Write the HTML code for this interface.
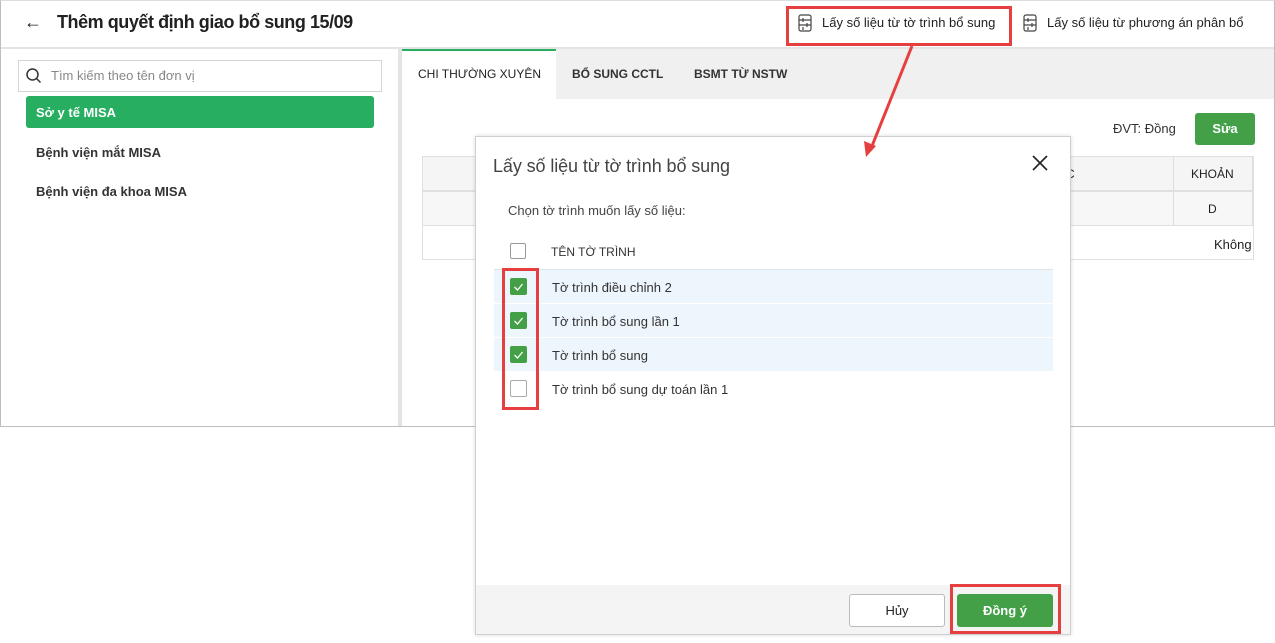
<!DOCTYPE html>
<html><head><meta charset="utf-8"><style>
*{box-sizing:border-box;margin:0;padding:0}
body{width:1275px;height:643px;background:#fff;font-family:"Liberation Sans",sans-serif;color:#212121;position:relative;overflow:hidden;font-size:13px}
.abs{position:absolute}
</style></head><body>
<div class="abs" style="left:0;top:0;width:1275px;height:427px;border:1px solid #bdbdbd;border-top:1px solid #ddd;background:#fff"></div>
<div class="abs" style="left:24px;top:12px;font-size:18px">←</div>
<div class="abs" style="left:57px;top:12px;font-size:18px;font-weight:bold;color:#212121;letter-spacing:-0.45px">Thêm quyết định giao bổ sung 15/09</div>
<svg class="abs" style="left:797px;top:14px" width="16" height="18" viewBox="0 0 16 18" fill="none" stroke="#444" stroke-width="1.2"><rect x="2" y="1" width="12" height="16" rx="2"/><path d="M2 6h12M2 11h12M6 4v4M10 9v4M6 13v3"/></svg>
<div class="abs" style="left:822px;top:15px;font-size:13px">Lấy số liệu từ tờ trình bổ sung</div>
<div class="abs" style="left:786px;top:6px;width:226px;height:40px;border:3px solid #e5403f"></div>
<svg class="abs" style="left:1022px;top:14px" width="16" height="18" viewBox="0 0 16 18" fill="none" stroke="#444" stroke-width="1.2"><rect x="2" y="1" width="12" height="16" rx="2"/><path d="M2 6h12M2 11h12M6 4v4M10 9v4M6 13v3"/></svg>
<div class="abs" style="left:1047px;top:15px;font-size:13px">Lấy số liệu từ phương án phân bổ</div>
<div class="abs" style="left:1px;top:47px;width:1273px;height:2px;background:#e4e4e4"></div>
<div class="abs" style="left:398px;top:49px;width:4px;height:377px;background:#e4e4e4"></div>
<div class="abs" style="left:18px;top:60px;width:364px;height:32px;border:1px solid #d6d6d6"></div>
<svg class="abs" style="left:25px;top:67px" width="18" height="18" viewBox="0 0 18 18" fill="none" stroke="#333" stroke-width="1.5"><circle cx="7.5" cy="7.5" r="5.5"/><path d="M11.5 11.5l4 4"/></svg>
<div class="abs" style="left:51px;top:68px;color:#888">Tìm kiếm theo tên đơn vị</div>
<div class="abs" style="left:26px;top:96px;width:348px;height:32px;background:#27ae60;border-radius:3px;color:#fff;font-weight:bold;padding:9px 10px">Sở y tế MISA</div>
<div class="abs" style="left:36px;top:145px;font-weight:bold;color:#333">Bệnh viện mắt MISA</div>
<div class="abs" style="left:36px;top:184px;font-weight:bold;color:#333">Bệnh viện đa khoa MISA</div>
<div class="abs" style="left:402px;top:49px;width:872px;height:50px;background:#f0f0f0"></div>
<div class="abs" style="left:402px;top:49px;width:154px;height:50px;background:#fff;border-top:2px solid #27ae60"></div>
<div class="abs" style="left:418px;top:67px;font-size:12px;color:#222">CHI THƯỜNG XUYÊN</div>
<div class="abs" style="left:572px;top:67px;font-size:12px;font-weight:bold;color:#333">BỔ SUNG CCTL</div>
<div class="abs" style="left:694px;top:67px;font-size:12px;font-weight:bold;color:#333">BSMT TỪ NSTW</div>
<div class="abs" style="left:1113px;top:121px;color:#333">ĐVT: Đồng</div>
<div class="abs" style="left:1195px;top:113px;width:60px;height:32px;background:#43a047;border-radius:3px;color:#fff;font-weight:bold;text-align:center;line-height:32px">Sửa</div>
<div class="abs" style="left:422px;top:156px;width:832px;height:104px;border:1px solid #e0e0e0;background:#fff"></div>
<div class="abs" style="left:422px;top:156px;width:832px;height:35px;background:#f5f5f5;border:1px solid #e0e0e0"></div>
<div class="abs" style="left:422px;top:191px;width:832px;height:35px;background:#f7f7f7;border:1px solid #e0e0e0"></div>
<div class="abs" style="left:1173px;top:156px;width:1px;height:70px;background:#ddd"></div>
<div class="abs" style="left:1252px;top:156px;width:1px;height:70px;background:#ddd"></div>
<div class="abs" style="left:1191px;top:167px;font-size:12px">KHOẢN</div>
<div class="abs" style="left:1208px;top:202px;font-size:12px">D</div>
<div class="abs" style="left:1214px;top:237px">Không</div>
<div class="abs" style="left:1066px;top:167px;font-size:12px">C</div>
<div class="abs" style="left:475px;top:136px;width:596px;height:499px;background:#fff;border:1px solid #cfcfcf;box-shadow:0 0 4px rgba(0,0,0,.15)"></div>
<div class="abs" style="left:493px;top:156px;font-size:18px;color:#444;letter-spacing:-0.1px">Lấy số liệu từ tờ trình bổ sung</div>
<svg class="abs" style="left:1032px;top:155px" width="16" height="16" viewBox="0 0 16 16" stroke="#222" stroke-width="1.6"><path d="M1 1l14 14M15 1L1 15"/></svg>
<div class="abs" style="left:508px;top:203px;color:#444">Chọn tờ trình muốn lấy số liệu:</div>
<div class="abs" style="left:510px;top:243px;width:16px;height:16px;border:1px solid #999;border-radius:2px;background:#fff"></div>
<div class="abs" style="left:551px;top:245px;font-size:12px;color:#333">TÊN TỜ TRÌNH</div>
<div class="abs" style="left:494px;top:269px;width:559px;height:1px;background:#dde3ea"></div>
<div class="abs" style="left:494px;top:270px;width:559px;height:33px;background:#eef6fd"></div>
<div class="abs" style="left:494px;top:304px;width:559px;height:33px;background:#eef6fd"></div>
<div class="abs" style="left:494px;top:338px;width:559px;height:33px;background:#eef6fd"></div>
<div class="abs" style="left:538px;top:270px;width:2px;height:101px;background:#fff"></div>
<div class="abs" style="left:510px;top:278px;width:17px;height:17px;background:#43a047;border-radius:2px"></div>
<div class="abs" style="left:510px;top:312px;width:17px;height:17px;background:#43a047;border-radius:2px"></div>
<div class="abs" style="left:510px;top:346px;width:17px;height:17px;background:#43a047;border-radius:2px"></div>
<svg class="abs" style="left:510px;top:278px" width="17" height="90"><g fill="none" stroke="#fff" stroke-width="1.3"><path d="M4.5 9l3 3 5-6"/><path d="M4.5 43l3 3 5-6"/><path d="M4.5 77l3 3 5-6"/></g></svg>
<div class="abs" style="left:510px;top:380px;width:17px;height:17px;border:1px solid #aaa;border-radius:2px;background:#fff"></div>
<div class="abs" style="left:552px;top:280px;color:#333">Tờ trình điều chỉnh 2</div>
<div class="abs" style="left:552px;top:314px;color:#333">Tờ trình bổ sung lần 1</div>
<div class="abs" style="left:552px;top:348px;color:#333">Tờ trình bổ sung</div>
<div class="abs" style="left:552px;top:382px;color:#333">Tờ trình bổ sung dự toán lần 1</div>
<div class="abs" style="left:502px;top:268px;width:37px;height:142px;border:3px solid #e5403f"></div>
<div class="abs" style="left:476px;top:585px;width:594px;height:49px;background:#f4f4f4"></div>
<div class="abs" style="left:849px;top:594px;width:96px;height:33px;background:#fff;border:1px solid #bbb;border-radius:3px;text-align:center;line-height:31px">Hủy</div>
<div class="abs" style="left:957px;top:594px;width:96px;height:33px;background:#43a047;border-radius:3px;color:#fff;font-weight:bold;text-align:center;line-height:33px">Đồng ý</div>
<div class="abs" style="left:950px;top:584px;width:111px;height:50px;border:3px solid #e5403f"></div>
<svg class="abs" style="left:0;top:0" width="1275" height="643"><line x1="912" y1="46" x2="872" y2="146" stroke="#e5403f" stroke-width="3"/><path d="M866 157l-2-16 12 5z" fill="#e5403f"/></svg>
</body></html>
